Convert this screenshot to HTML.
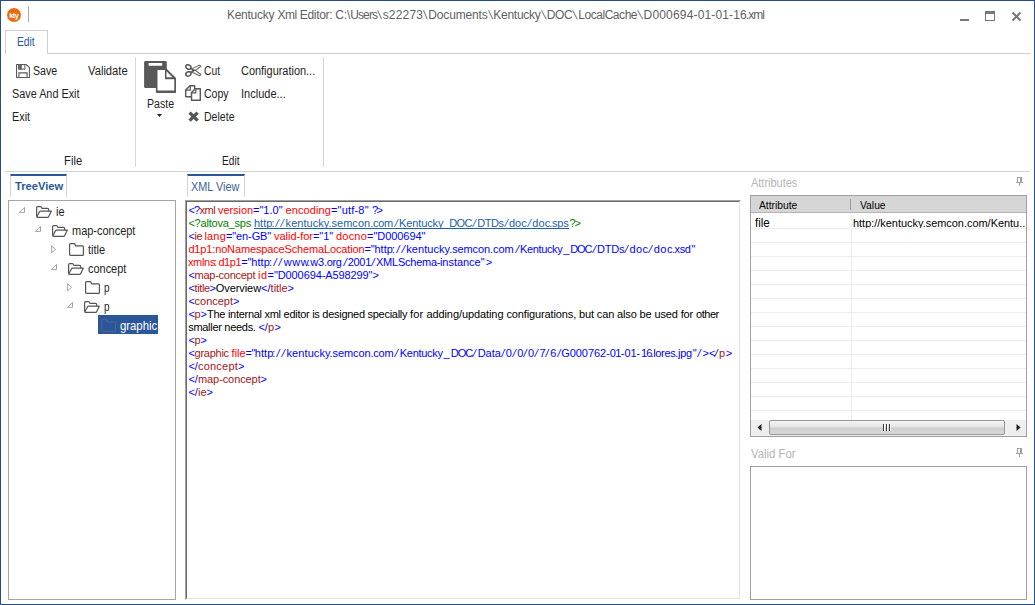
<!DOCTYPE html>
<html><head><meta charset="utf-8">
<style>
*{box-sizing:border-box;margin:0;padding:0}
html,body{width:1035px;height:605px;overflow:hidden;background:#fff}
body{font-family:"Liberation Sans",sans-serif;font-size:12px;color:#1e1e1e;position:relative}
.abs{position:absolute}
.t{position:absolute;white-space:pre;line-height:14px;height:14px;transform-origin:0 0}
.x{position:absolute;white-space:pre;font-size:11px;line-height:13px;height:13px;transform-origin:0 0}
#win{position:absolute;left:0;top:0;width:1035px;height:605px;border:1px solid #284c88}
.ln{position:absolute;background:#c6c6c6}
.b{color:#0000ff}.r{color:#a31515}.rr{color:#ff0000}.k{color:#000}.g{color:#008000}.lk{color:#215fa5}
.gl{position:absolute;left:751px;width:275px;height:1px;background:#ececec}
</style></head><body>
<div id="win"></div>

<!-- title bar -->
<div class="abs" style="left:7px;top:8px;width:14px;height:14px;border-radius:50%;background:#e96c10"></div>
<div class="t" style="left:9.2px;top:9.7px;font-size:7.5px;line-height:11px;height:11px;color:#fff;font-weight:bold;letter-spacing:-0.5px">kty</div>
<div class="ln" style="left:28px;top:6px;width:1px;height:16px;background:#a8a8a8"></div>
<!-- window buttons -->
<div class="abs" style="left:960px;top:19px;width:9px;height:2px;background:#777"></div>
<div class="abs" style="left:985px;top:11px;width:10px;height:10px;border:1px solid #777;border-top-width:3px"></div>
<svg class="abs" style="left:1011px;top:11px" width="11" height="11" viewBox="0 0 11 11"><path d="M1.5 1.5 L9.5 9.5 M9.5 1.5 L1.5 9.5" stroke="#777" stroke-width="2" fill="none"/></svg>

<!-- ribbon tab -->
<div class="ln" style="left:47px;top:53px;width:984px;height:1px;background:#cfcfcf"></div>
<div class="abs" style="left:5px;top:30px;width:43px;height:24px;border:1px solid #cfcfcf;border-bottom:none;background:#fff"></div>

<!-- ribbon content -->
<svg class="abs" style="left:16px;top:64px" width="14" height="14" viewBox="0 0 14 14"><path d="M0.55 0.55 H10.3 L13.45 3.7 V13.45 H0.55 Z" fill="#fff" stroke="#5a5a5a" stroke-width="1.1" stroke-linejoin="round"/><rect x="2.3" y="0.8" width="3.6" height="4.8" fill="#6a6a6a"/><path d="M2.7 1 V5.1 H8.9 V1" stroke="#5a5a5a" stroke-width="1" fill="none"/><path d="M2.9 13 V8.9 H11.1 V13" stroke="#5a5a5a" stroke-width="1.1" fill="none"/></svg>
<div class="ln" style="left:135px;top:57px;width:1px;height:110px;background:#d8d8d8"></div>

<!-- paste icon -->
<svg class="abs" style="left:144px;top:61px" width="32" height="32" viewBox="0 0 32 32"><rect x="0.1" y="0.1" width="22.7" height="27" rx="1.4" fill="#585858"/><rect x="4.6" y="2.1" width="13.6" height="2.6" rx="0.4" fill="#fff"/><path d="M11.9 7.9 H22.9 L32 17 V31.2 Q32 32 31.2 32 H12.7 Q11.9 32 11.9 31.2 Z" fill="#585858"/><path d="M13.5 8.9 H21 V18.2 H30.3 V29.4 H13.5 Z" fill="#fff"/><path d="M22.5 10.2 V16.2 H28.4 Z" fill="#fff"/></svg>
<svg class="abs" style="left:157px;top:114px" width="5" height="3" viewBox="0 0 5 3"><path d="M0 0 H5 L2.5 3 Z" fill="#222"/></svg>

<!-- cut copy delete -->
<svg class="abs" style="left:185px;top:64px" width="17" height="13" viewBox="0 0 17 13"><ellipse cx="3.4" cy="3" rx="2.7" ry="2.1" transform="rotate(22 3.4 3)" fill="none" stroke="#5a5a5a" stroke-width="1.55"/><ellipse cx="3.4" cy="9.9" rx="2.7" ry="2.1" transform="rotate(-22 3.4 9.9)" fill="none" stroke="#5a5a5a" stroke-width="1.55"/><path d="M5.8 4.4 L8.8 6.6 M5.8 8.5 L8.8 6.3" stroke="#5e5e5e" stroke-width="1.6" fill="none"/><path d="M7.2 4.6 L14.6 1.1 L15.9 2.4 L9.6 7 Z" fill="#fff" stroke="#606060" stroke-width="1.05" stroke-linejoin="round"/><path d="M7.2 8.3 L14.6 11.8 L15.9 10.5 L9.6 5.9 Z" fill="#fff" stroke="#606060" stroke-width="1.05" stroke-linejoin="round"/><circle cx="8.6" cy="6.45" r="0.8" fill="#444"/></svg>
<svg class="abs" style="left:185px;top:85px" width="17" height="16" viewBox="0 0 17 16"><path d="M0.7 5 L5 0.7 H9.6 V11.8 H1.4 Q0.7 11.8 0.7 11.1 Z" fill="#fff" stroke="#595959" stroke-width="1.45" stroke-linejoin="round"/><path d="M1 5.1 H5.3 V1" fill="none" stroke="#595959" stroke-width="1.2"/><path d="M6.5 7.6 L10.4 3.7 H15.3 V15.2 H6.5 Z" fill="#fff" stroke="#595959" stroke-width="1.45" stroke-linejoin="round"/><path d="M6.8 7.9 H10.8 V4" fill="none" stroke="#595959" stroke-width="1.2"/></svg>
<svg class="abs" style="left:188px;top:111px" width="11" height="11" viewBox="0 0 11 11"><path d="M1.6 1.6 L9.6 9.6 M9.6 1.6 L1.6 9.6" stroke="#555" stroke-width="3.3" fill="none"/></svg>
<div class="ln" style="left:323px;top:57px;width:1px;height:110px;background:#d8d8d8"></div>

<!-- ribbon bottom line -->
<div class="ln" style="left:5px;top:171px;width:1025px;height:1px;background:#d4d4d4"></div>

<!-- TreeView tab -->
<div class="abs" style="left:10px;top:174px;width:57px;height:23px;border:1px solid #d4d4d4;border-top:2px solid #2b579a;border-bottom:none;background:#fff"></div>
<div class="abs" style="left:8px;top:200px;width:168px;height:400px;border:1px solid #a6a6a6;background:#fff"></div>
<!--TREE0-->
<svg class="abs" style="left:19.2px;top:207.3px" width="6" height="6" viewBox="0 0 6 6"><path d="M5.5 0.4 V5.4 H0.4 Z" fill="none" stroke="#a0a0a0" stroke-width="1"/></svg>
<svg class="abs" style="left:35.9px;top:205.9px" width="16" height="12" viewBox="0 0 16 12"><path d="M0.6 10.6 V1.6 Q0.6 0.6 1.6 0.6 H4.4 Q5 0.6 5.3 1.2 L6 2.3 H11.6 Q12.6 2.3 12.6 3.3 V5.2" fill="none" stroke="#555" stroke-width="1.2"/><path d="M0.9 10.8 L3.5 5.7 Q3.8 5.2 4.4 5.2 H15.3 L12.6 10.8 Q12.3 11.4 11.7 11.4 H1.3 Q0.6 11.4 0.9 10.8 Z" fill="none" stroke="#555" stroke-width="1.2" stroke-linejoin="round"/></svg>
<svg class="abs" style="left:35.2px;top:226.3px" width="6" height="6" viewBox="0 0 6 6"><path d="M5.5 0.4 V5.4 H0.4 Z" fill="none" stroke="#a0a0a0" stroke-width="1"/></svg>
<svg class="abs" style="left:51.9px;top:224.9px" width="16" height="12" viewBox="0 0 16 12"><path d="M0.6 10.6 V1.6 Q0.6 0.6 1.6 0.6 H4.4 Q5 0.6 5.3 1.2 L6 2.3 H11.6 Q12.6 2.3 12.6 3.3 V5.2" fill="none" stroke="#555" stroke-width="1.2"/><path d="M0.9 10.8 L3.5 5.7 Q3.8 5.2 4.4 5.2 H15.3 L12.6 10.8 Q12.3 11.4 11.7 11.4 H1.3 Q0.6 11.4 0.9 10.8 Z" fill="none" stroke="#555" stroke-width="1.2" stroke-linejoin="round"/></svg>
<svg class="abs" style="left:50.9px;top:245.3px" width="6" height="9" viewBox="0 0 6 9"><path d="M0.6 0.8 V7.9 L4.6 4.3 Z" fill="none" stroke="#a6a6a6" stroke-width="1"/></svg>
<svg class="abs" style="left:68.9px;top:242.8px" width="15" height="13" viewBox="0 0 15 13"><path d="M0.6 11.4 V1.6 Q0.6 0.6 1.6 0.6 H5.2 Q5.9 0.6 6.1 1.3 L6.5 2.9 H13.4 Q14.4 2.9 14.4 3.9 V11.4 Q14.4 12.4 13.4 12.4 H1.6 Q0.6 12.4 0.6 11.4 Z" fill="none" stroke="#555" stroke-width="1.2"/></svg>
<svg class="abs" style="left:51.2px;top:264.3px" width="6" height="6" viewBox="0 0 6 6"><path d="M5.5 0.4 V5.4 H0.4 Z" fill="none" stroke="#a0a0a0" stroke-width="1"/></svg>
<svg class="abs" style="left:67.9px;top:262.9px" width="16" height="12" viewBox="0 0 16 12"><path d="M0.6 10.6 V1.6 Q0.6 0.6 1.6 0.6 H4.4 Q5 0.6 5.3 1.2 L6 2.3 H11.6 Q12.6 2.3 12.6 3.3 V5.2" fill="none" stroke="#555" stroke-width="1.2"/><path d="M0.9 10.8 L3.5 5.7 Q3.8 5.2 4.4 5.2 H15.3 L12.6 10.8 Q12.3 11.4 11.7 11.4 H1.3 Q0.6 11.4 0.9 10.8 Z" fill="none" stroke="#555" stroke-width="1.2" stroke-linejoin="round"/></svg>
<svg class="abs" style="left:66.9px;top:283.3px" width="6" height="9" viewBox="0 0 6 9"><path d="M0.6 0.8 V7.9 L4.6 4.3 Z" fill="none" stroke="#a6a6a6" stroke-width="1"/></svg>
<svg class="abs" style="left:84.9px;top:280.8px" width="15" height="13" viewBox="0 0 15 13"><path d="M0.6 11.4 V1.6 Q0.6 0.6 1.6 0.6 H5.2 Q5.9 0.6 6.1 1.3 L6.5 2.9 H13.4 Q14.4 2.9 14.4 3.9 V11.4 Q14.4 12.4 13.4 12.4 H1.6 Q0.6 12.4 0.6 11.4 Z" fill="none" stroke="#555" stroke-width="1.2"/></svg>
<svg class="abs" style="left:67.2px;top:302.3px" width="6" height="6" viewBox="0 0 6 6"><path d="M5.5 0.4 V5.4 H0.4 Z" fill="none" stroke="#a0a0a0" stroke-width="1"/></svg>
<svg class="abs" style="left:83.9px;top:300.9px" width="16" height="12" viewBox="0 0 16 12"><path d="M0.6 10.6 V1.6 Q0.6 0.6 1.6 0.6 H4.4 Q5 0.6 5.3 1.2 L6 2.3 H11.6 Q12.6 2.3 12.6 3.3 V5.2" fill="none" stroke="#555" stroke-width="1.2"/><path d="M0.9 10.8 L3.5 5.7 Q3.8 5.2 4.4 5.2 H15.3 L12.6 10.8 Q12.3 11.4 11.7 11.4 H1.3 Q0.6 11.4 0.9 10.8 Z" fill="none" stroke="#555" stroke-width="1.2" stroke-linejoin="round"/></svg>
<div class="abs" style="left:98px;top:315px;width:60px;height:19px;background:#2b579a"></div>
<svg class="abs" style="left:100.9px;top:318.8px" width="15" height="13" viewBox="0 0 15 13"><path d="M0.6 11.4 V1.6 Q0.6 0.6 1.6 0.6 H5.2 Q5.9 0.6 6.1 1.3 L6.5 2.9 H13.4 Q14.4 2.9 14.4 3.9 V11.4 Q14.4 12.4 13.4 12.4 H1.6 Q0.6 12.4 0.6 11.4 Z" fill="none" stroke="#4a6492" stroke-width="1.2"/></svg>
<!--TREE1-->

<!-- XML View tab -->
<div class="abs" style="left:187px;top:174px;width:58px;height:23px;border:1px solid #d4d4d4;border-top:2px solid #2b579a;border-bottom:none;background:#fff"></div>
<div class="abs" style="left:185px;top:200px;width:556px;height:400px;border:1px solid #fff;border-left-color:#a0a0a0;border-top-color:#a0a0a0;background:#fff"></div>
<div class="abs" style="left:186px;top:201px;width:554px;height:398px;border:1px solid #e3e3e3;border-left-color:#696969;border-top-color:#696969;background:#fff"></div>

<!-- Attributes panel -->
<div class="abs" style="left:750px;top:195px;width:277px;height:242px;border:1px solid #a0a0a0;background:#fff"></div>
<div class="abs" style="left:751px;top:196px;width:275px;height:17px;background:#d6d6d6;border-bottom:1px solid #b4b4b4"></div>
<div class="abs" style="left:850px;top:199px;width:1px;height:11px;background:#9a9a9a"></div>
<div class="gl" style="top:228px"></div>
<div class="gl" style="top:242px"></div>
<div class="gl" style="top:256px"></div>
<div class="gl" style="top:270px"></div>
<div class="gl" style="top:284px"></div>
<div class="gl" style="top:298px"></div>
<div class="gl" style="top:312px"></div>
<div class="gl" style="top:326px"></div>
<div class="gl" style="top:340px"></div>
<div class="gl" style="top:354px"></div>
<div class="gl" style="top:368px"></div>
<div class="gl" style="top:382px"></div>
<div class="gl" style="top:396px"></div>
<div class="gl" style="top:410px"></div>
<div class="abs" style="left:851px;top:214px;width:1px;height:206px;background:#ececec"></div>
<!-- scrollbar -->
<div class="abs" style="left:751px;top:420px;width:275px;height:16px;background:#efefef"></div>
<div class="abs" style="left:769px;top:420px;width:236px;height:15px;border:1px solid #979797;border-radius:2px;background:linear-gradient(#f4f4f4,#e4e4e4 45%,#cfcfcf 55%,#d9d9d9)"></div>
<div class="abs" style="left:883px;top:424px;width:2px;height:7px;background:linear-gradient(90deg,#3a3a3a 50%,#fafafa 50%)"></div>
<div class="abs" style="left:886px;top:424px;width:2px;height:7px;background:linear-gradient(90deg,#3a3a3a 50%,#fafafa 50%)"></div>
<div class="abs" style="left:889px;top:424px;width:2px;height:7px;background:linear-gradient(90deg,#3a3a3a 50%,#fafafa 50%)"></div>
<svg class="abs" style="left:757px;top:424px" width="5" height="7" viewBox="0 0 5 7"><path d="M4.5 0 V7 L0.5 3.5 Z" fill="#222"/></svg>
<svg class="abs" style="left:1016px;top:424px" width="5" height="7" viewBox="0 0 5 7"><path d="M0.5 0 V7 L4.5 3.5 Z" fill="#222"/></svg>
<!-- pins -->
<svg class="abs" style="left:1016px;top:177px" width="7" height="9" viewBox="0 0 7 9" shape-rendering="crispEdges"><rect x="1" y="0" width="5" height="1" fill="#a0a0a0"/><rect x="1" y="0" width="1" height="5" fill="#a0a0a0"/><rect x="4" y="0" width="2" height="5" fill="#a0a0a0"/><rect x="0" y="5" width="7" height="1" fill="#a0a0a0"/><rect x="3" y="6" width="1" height="3" fill="#a0a0a0"/></svg>
<svg class="abs" style="left:1016px;top:448px" width="7" height="9" viewBox="0 0 7 9" shape-rendering="crispEdges"><rect x="1" y="0" width="5" height="1" fill="#a0a0a0"/><rect x="1" y="0" width="1" height="5" fill="#a0a0a0"/><rect x="4" y="0" width="2" height="5" fill="#a0a0a0"/><rect x="0" y="5" width="7" height="1" fill="#a0a0a0"/><rect x="3" y="6" width="1" height="3" fill="#a0a0a0"/></svg>
<div class="abs" style="left:750px;top:466px;width:277px;height:134px;border:1px solid #a0a0a0;background:#fff"></div>

<div class="t" style="left:17.00px;top:35.00px;font-size:12px;color:#2b579a;transform:scaleX(0.8574)">Edit</div>
<div class="t" style="left:32.80px;top:63.80px;font-size:12px;color:#1e1e1e;transform:scaleX(0.8852)">Save</div>
<div class="t" style="left:88.00px;top:63.80px;font-size:12px;color:#1e1e1e;transform:scaleX(0.9346)">Validate</div>
<div class="t" style="left:12.30px;top:86.80px;font-size:12px;color:#1e1e1e;transform:scaleX(0.9035)">Save And Exit</div>
<div class="t" style="left:12.30px;top:109.80px;font-size:12px;color:#1e1e1e;transform:scaleX(0.9047)">Exit</div>
<div class="t" style="left:63.50px;top:153.60px;font-size:12px;color:#1e1e1e;transform:scaleX(0.9409)">File</div>
<div class="t" style="left:147.00px;top:97.00px;font-size:12px;color:#1e1e1e;transform:scaleX(0.8835)">Paste</div>
<div class="t" style="left:203.70px;top:63.80px;font-size:12px;color:#1e1e1e;transform:scaleX(0.8583)">Cut</div>
<div class="t" style="left:203.70px;top:86.80px;font-size:12px;color:#1e1e1e;transform:scaleX(0.8781)">Copy</div>
<div class="t" style="left:204.20px;top:109.80px;font-size:12px;color:#1e1e1e;transform:scaleX(0.8797)">Delete</div>
<div class="t" style="left:241.40px;top:63.80px;font-size:12px;color:#1e1e1e;transform:scaleX(0.9118)">Configuration...</div>
<div class="t" style="left:240.88px;top:86.80px;font-size:12px;color:#1e1e1e;transform:scaleX(0.9184)">Include...</div>
<div class="t" style="left:222.00px;top:153.60px;font-size:12px;color:#1e1e1e;transform:scaleX(0.8433)">Edit</div>
<div class="t" style="left:14.60px;top:179.20px;font-size:11.5px;color:#2b579a;transform:scaleX(0.9696);font-weight:bold">TreeView</div>
<div class="t" style="left:191.00px;top:179.70px;font-size:12px;color:#44619a;transform:scaleX(0.9051)">XML View</div>
<div class="t" style="left:56.30px;top:205.00px;font-size:12px;color:#1e1e1e;transform:scaleX(0.9104)">ie</div>
<div class="t" style="left:72.40px;top:224.00px;font-size:12px;color:#1e1e1e;transform:scaleX(0.9138)">map-concept</div>
<div class="t" style="left:88.30px;top:243.00px;font-size:12px;color:#1e1e1e;transform:scaleX(0.9211)">title</div>
<div class="t" style="left:88.30px;top:262.00px;font-size:12px;color:#1e1e1e;transform:scaleX(0.9111)">concept</div>
<div class="t" style="left:104.40px;top:281.00px;font-size:12px;color:#1e1e1e;transform:scaleX(0.8286)">p</div>
<div class="t" style="left:104.40px;top:300.00px;font-size:12px;color:#1e1e1e;transform:scaleX(0.8286)">p</div>
<div class="t" style="left:120.00px;top:319.00px;font-size:12px;color:#ffffff;transform:scaleX(0.9426)">graphic</div>
<div class="t" style="left:751.00px;top:176.00px;font-size:12px;color:#b4b4b4;transform:scaleX(0.9134)">Attributes</div>
<div class="t" style="left:751.00px;top:446.60px;font-size:12px;color:#b4b4b4;transform:scaleX(0.9463)">Valid For</div>
<div class="t" style="left:759.00px;top:197.80px;font-size:11px;color:#000;transform:scaleX(0.9352)">Attribute</div>
<div class="t" style="left:859.50px;top:197.80px;font-size:11px;color:#000;transform:scaleX(0.9375)">Value</div>
<div class="t" style="left:755.10px;top:216.00px;font-size:12px;color:#000;transform:scaleX(0.9639)">file</div>
<div class="t" style="left:853.20px;top:216.00px;font-size:11px;color:#000;transform:scaleX(0.9932)">http://kentucky.semcon.com/Kentu..</div>
<span class="x b" style="left:188.40px;top:204.00px;letter-spacing:-0.771px">&lt;?</span>
<span class="x r" style="left:199.40px;top:204.00px;letter-spacing:-0.391px">xml</span>
<span class="x rr" style="left:215.01px;top:204.00px;letter-spacing:-0.066px"> version</span>
<span class="x b" style="left:253.00px;top:204.00px;letter-spacing:0.003px">=&quot;1.0&quot;</span>
<span class="x rr" style="left:282.45px;top:204.00px;letter-spacing:0.094px"> encoding</span>
<span class="x b" style="left:331.00px;top:204.00px;letter-spacing:0.189px">=&quot;utf-8&quot;</span>
<span class="x b" style="left:370.66px;top:204.00px;letter-spacing:-1.718px"> ?</span>
<span class="x b" style="left:376.40px;top:204.00px;letter-spacing:0.000px">&gt;</span>
<span class="x g" style="left:188.40px;top:217.00px;letter-spacing:-0.207px">&lt;?altova_sps </span>
<span class="x lk" style="left:253.90px;top:217.00px;letter-spacing:0.038px">http</span>
<span class="x lk" style="left:271.40px;top:217.00px;letter-spacing:-0.156px">:</span>
<span class="x lk" style="left:275.30px;top:217.00px;width:5.10px;transform:skewX(-11.0deg);transform-origin:0 10.0px">/</span>
<span class="x lk" style="left:280.40px;top:217.00px;width:5.20px;transform:skewX(-11.7deg);transform-origin:0 10.0px">/</span>
<span class="x lk" style="left:285.60px;top:217.00px;letter-spacing:0.049px">kentucky</span>
<span class="x lk" style="left:328.40px;top:217.00px;letter-spacing:0.033px">.semcon</span>
<span class="x lk" style="left:370.20px;top:217.00px;letter-spacing:-0.309px">.com</span>
<span class="x lk" style="left:393.80px;top:217.00px;width:5.30px;transform:skewX(-12.4deg);transform-origin:0 10.0px">/</span>
<span class="x lk" style="left:399.10px;top:217.00px;letter-spacing:-0.129px">Kentucky_</span>
<span class="x lk" style="left:449.30px;top:217.00px;letter-spacing:-0.648px">DOC</span>
<span class="x lk" style="left:471.80px;top:217.00px;width:5.40px;transform:skewX(-13.1deg);transform-origin:0 10.0px">/</span>
<span class="x lk" style="left:477.20px;top:217.00px;letter-spacing:-0.452px">DTDs</span>
<span class="x lk" style="left:503.50px;top:217.00px;width:5.40px;transform:skewX(-13.1deg);transform-origin:0 10.0px">/</span>
<span class="x lk" style="left:508.90px;top:217.00px;letter-spacing:0.088px">doc</span>
<span class="x lk" style="left:526.90px;top:217.00px;width:5.40px;transform:skewX(-13.1deg);transform-origin:0 10.0px">/</span>
<span class="x lk" style="left:532.30px;top:217.00px;letter-spacing:0.088px">doc</span>
<span class="x lk" style="left:549.30px;top:217.00px;letter-spacing:-0.268px">.sps</span>
<span class="x g" style="left:569.40px;top:217.00px;letter-spacing:-1.118px">?&gt;</span>
<span class="x b" style="left:188.40px;top:230.00px;letter-spacing:-0.224px">&lt;</span>
<span class="x r" style="left:194.60px;top:230.00px;letter-spacing:-0.606px">ie</span>
<span class="x rr" style="left:201.14px;top:230.00px;letter-spacing:0.201px"> lang</span>
<span class="x b" style="left:226.00px;top:230.00px;letter-spacing:-0.120px">=&quot;en-GB&quot;</span>
<span class="x rr" style="left:270.96px;top:230.00px;letter-spacing:-0.014px"> valid-for</span>
<span class="x b" style="left:313.00px;top:230.00px;letter-spacing:-0.081px">=&quot;1&quot;</span>
<span class="x rr" style="left:332.74px;top:230.00px;letter-spacing:0.206px"> docno</span>
<span class="x b" style="left:367.00px;top:230.00px;letter-spacing:-0.042px">=&quot;D000694&quot;</span>
<span class="x rr" style="left:188.40px;top:243.00px;letter-spacing:-0.147px">d1p1:noNamespaceSchemaLocation</span>
<span class="x b" style="left:364.40px;top:243.00px;letter-spacing:-0.164px">=&quot;</span>
<span class="x b" style="left:374.40px;top:243.00px;letter-spacing:0.038px">http</span>
<span class="x b" style="left:391.90px;top:243.00px;letter-spacing:-0.156px">:</span>
<span class="x b" style="left:395.80px;top:243.00px;width:5.00px;transform:skewX(-10.3deg);transform-origin:0 10.0px">/</span>
<span class="x b" style="left:400.80px;top:243.00px;width:5.40px;transform:skewX(-13.1deg);transform-origin:0 10.0px">/</span>
<span class="x b" style="left:406.20px;top:243.00px;letter-spacing:0.074px">kentucky</span>
<span class="x b" style="left:449.20px;top:243.00px;letter-spacing:-0.110px">.semcon</span>
<span class="x b" style="left:490.00px;top:243.00px;letter-spacing:-0.084px">.com</span>
<span class="x b" style="left:514.50px;top:243.00px;width:5.50px;transform:skewX(-13.8deg);transform-origin:0 10.0px">/</span>
<span class="x b" style="left:520.00px;top:243.00px;letter-spacing:-0.368px">Kentucky</span>
<span class="x b" style="left:563.30px;top:243.00px;letter-spacing:1.782px">_</span>
<span class="x b" style="left:570.20px;top:243.00px;letter-spacing:-1.048px">DOC</span>
<span class="x b" style="left:591.50px;top:243.00px;width:5.40px;transform:skewX(-13.1deg);transform-origin:0 10.0px">/</span>
<span class="x b" style="left:596.90px;top:243.00px;letter-spacing:-0.202px">DTDs</span>
<span class="x b" style="left:624.20px;top:243.00px;width:5.40px;transform:skewX(-13.1deg);transform-origin:0 10.0px">/</span>
<span class="x b" style="left:629.60px;top:243.00px;letter-spacing:0.355px">doc</span>
<span class="x b" style="left:648.40px;top:243.00px;width:5.40px;transform:skewX(-13.1deg);transform-origin:0 10.0px">/</span>
<span class="x b" style="left:653.80px;top:243.00px;letter-spacing:0.455px">doc</span>
<span class="x b" style="left:671.90px;top:243.00px;letter-spacing:-0.393px">.xsd</span>
<span class="x b" style="left:691.50px;top:243.00px;letter-spacing:0.000px">&quot;</span>
<span class="x rr" style="left:187.90px;top:256.00px;letter-spacing:-0.305px">xmlns</span>
<span class="x rr" style="left:214.10px;top:256.00px;letter-spacing:0.244px">:</span>
<span class="x rr" style="left:218.40px;top:256.00px;letter-spacing:-0.393px">d1p1</span>
<span class="x b" style="left:241.30px;top:256.00px;letter-spacing:-0.164px">=&quot;</span>
<span class="x b" style="left:251.30px;top:256.00px;letter-spacing:0.063px">http</span>
<span class="x b" style="left:268.90px;top:256.00px;letter-spacing:-0.256px">:</span>
<span class="x b" style="left:272.70px;top:256.00px;width:5.00px;transform:skewX(-10.3deg);transform-origin:0 10.0px">/</span>
<span class="x b" style="left:277.70px;top:256.00px;width:5.00px;transform:skewX(-10.3deg);transform-origin:0 10.0px">/</span>
<span class="x b" style="left:283.70px;top:256.00px;letter-spacing:0.589px">www</span>
<span class="x b" style="left:307.30px;top:256.00px;letter-spacing:-0.106px">.w3</span>
<span class="x b" style="left:324.10px;top:256.00px;letter-spacing:-0.389px">.org</span>
<span class="x b" style="left:342.50px;top:256.00px;width:5.20px;transform:skewX(-11.7deg);transform-origin:0 10.0px">/</span>
<span class="x b" style="left:347.70px;top:256.00px;letter-spacing:-0.293px">2001</span>
<span class="x b" style="left:371.00px;top:256.00px;width:5.00px;transform:skewX(-10.3deg);transform-origin:0 10.0px">/</span>
<span class="x b" style="left:376.00px;top:256.00px;letter-spacing:-0.241px">XMLSchema</span>
<span class="x b" style="left:436.80px;top:256.00px;letter-spacing:-0.563px">-</span>
<span class="x b" style="left:439.90px;top:256.00px;letter-spacing:-0.021px">instance</span>
<span class="x b" style="left:480.70px;top:256.00px;letter-spacing:1.095px">&quot;</span>
<span class="x b" style="left:485.70px;top:256.00px;letter-spacing:0.000px">&gt;</span>
<span class="x b" style="left:188.40px;top:269.00px;letter-spacing:-0.224px">&lt;</span>
<span class="x r" style="left:194.60px;top:269.00px;letter-spacing:-0.270px">map-concept</span>
<span class="x rr" style="left:254.42px;top:269.00px;letter-spacing:0.519px"> id</span>
<span class="x b" style="left:267.60px;top:269.00px;letter-spacing:-0.099px">=&quot;D000694-A598299&quot;&gt;</span>
<span class="x b" style="left:188.40px;top:282.00px;letter-spacing:-0.224px">&lt;</span>
<span class="x r" style="left:194.60px;top:282.00px;letter-spacing:-0.424px">title</span>
<span class="x b" style="left:209.60px;top:282.00px;letter-spacing:-0.224px">&gt;</span>
<span class="x k" style="left:215.80px;top:282.00px;letter-spacing:-0.080px">Overview</span>
<span class="x b" style="left:261.00px;top:282.00px;letter-spacing:0.060px">&lt;/</span>
<span class="x r" style="left:270.60px;top:282.00px;letter-spacing:-0.024px">title</span>
<span class="x b" style="left:287.60px;top:282.00px;letter-spacing:0.000px">&gt;</span>
<span class="x b" style="left:188.40px;top:295.00px;letter-spacing:-0.224px">&lt;</span>
<span class="x r" style="left:194.60px;top:295.00px;letter-spacing:-0.018px">concept</span>
<span class="x b" style="left:233.00px;top:295.00px;letter-spacing:0.000px">&gt;</span>
<span class="x b" style="left:188.40px;top:308.00px;letter-spacing:-0.224px">&lt;</span>
<span class="x r" style="left:194.60px;top:308.00px;letter-spacing:-0.318px">p</span>
<span class="x b" style="left:200.40px;top:308.00px;letter-spacing:0.176px">&gt;</span>
<span class="x k" style="left:207.00px;top:308.00px;letter-spacing:-0.279px">The internal xml editor is designed specially </span>
<span class="x k" style="left:410.00px;top:308.00px;letter-spacing:0.127px">for </span>
<span class="x k" style="left:426.40px;top:308.00px;letter-spacing:-0.084px">adding/updating </span>
<span class="x k" style="left:506.40px;top:308.00px;letter-spacing:-0.125px">configurations, </span>
<span class="x k" style="left:579.00px;top:308.00px;letter-spacing:-0.139px">but can also be used for </span>
<span class="x k" style="left:696.00px;top:308.00px;letter-spacing:-0.452px">other</span>
<span class="x k" style="left:188.20px;top:321.00px;letter-spacing:-0.293px">smaller needs. </span>
<span class="x b" style="left:258.40px;top:321.00px;letter-spacing:0.060px">&lt;/</span>
<span class="x r" style="left:268.00px;top:321.00px;letter-spacing:0.282px">p</span>
<span class="x b" style="left:274.40px;top:321.00px;letter-spacing:0.000px">&gt;</span>
<span class="x b" style="left:188.40px;top:334.00px;letter-spacing:-0.224px">&lt;</span>
<span class="x r" style="left:194.60px;top:334.00px;letter-spacing:-0.318px">p</span>
<span class="x b" style="left:200.40px;top:334.00px;letter-spacing:0.000px">&gt;</span>
<span class="x b" style="left:188.40px;top:347.00px;letter-spacing:-0.224px">&lt;</span>
<span class="x r" style="left:194.60px;top:347.00px;letter-spacing:-0.267px">graphic</span>
<span class="x rr" style="left:228.56px;top:347.00px;letter-spacing:-0.015px"> file</span>
<span class="x b" style="left:245.60px;top:347.00px;letter-spacing:-0.564px">=&quot;</span>
<span class="x b" style="left:254.80px;top:347.00px;letter-spacing:0.038px">http</span>
<span class="x b" style="left:272.30px;top:347.00px;letter-spacing:-0.156px">:</span>
<span class="x b" style="left:276.20px;top:347.00px;width:5.00px;transform:skewX(-10.3deg);transform-origin:0 10.0px">/</span>
<span class="x b" style="left:281.20px;top:347.00px;width:5.30px;transform:skewX(-12.4deg);transform-origin:0 10.0px">/</span>
<span class="x b" style="left:286.50px;top:347.00px;letter-spacing:0.086px">kentucky</span>
<span class="x b" style="left:329.60px;top:347.00px;letter-spacing:-0.110px">.semcon</span>
<span class="x b" style="left:370.40px;top:347.00px;letter-spacing:-0.209px">.com</span>
<span class="x b" style="left:394.40px;top:347.00px;width:5.40px;transform:skewX(-13.1deg);transform-origin:0 10.0px">/</span>
<span class="x b" style="left:399.80px;top:347.00px;letter-spacing:-0.306px">Kentucky</span>
<span class="x b" style="left:443.60px;top:347.00px;letter-spacing:2.082px">_</span>
<span class="x b" style="left:450.80px;top:347.00px;letter-spacing:-0.981px">DOC</span>
<span class="x b" style="left:472.30px;top:347.00px;width:5.40px;transform:skewX(-13.1deg);transform-origin:0 10.0px">/</span>
<span class="x b" style="left:477.70px;top:347.00px;letter-spacing:-0.009px">Data</span>
<span class="x b" style="left:500.90px;top:347.00px;width:4.80px;transform:skewX(-8.9deg);transform-origin:0 10.0px">/</span>
<span class="x b" style="left:505.70px;top:347.00px;letter-spacing:0.182px">0</span>
<span class="x b" style="left:512.00px;top:347.00px;width:5.30px;transform:skewX(-12.4deg);transform-origin:0 10.0px">/</span>
<span class="x b" style="left:517.30px;top:347.00px;letter-spacing:-0.418px">0</span>
<span class="x b" style="left:523.00px;top:347.00px;width:5.00px;transform:skewX(-10.3deg);transform-origin:0 10.0px">/</span>
<span class="x b" style="left:528.00px;top:347.00px;letter-spacing:0.182px">0</span>
<span class="x b" style="left:534.30px;top:347.00px;width:5.30px;transform:skewX(-12.4deg);transform-origin:0 10.0px">/</span>
<span class="x b" style="left:539.60px;top:347.00px;letter-spacing:-0.318px">7</span>
<span class="x b" style="left:545.40px;top:347.00px;width:4.80px;transform:skewX(-8.9deg);transform-origin:0 10.0px">/</span>
<span class="x b" style="left:550.20px;top:347.00px;letter-spacing:0.182px">6</span>
<span class="x b" style="left:556.50px;top:347.00px;width:4.80px;transform:skewX(-8.9deg);transform-origin:0 10.0px">/</span>
<span class="x b" style="left:561.30px;top:347.00px;letter-spacing:-0.080px">G000762</span>
<span class="x b" style="left:606.00px;top:347.00px;letter-spacing:0.037px">-</span>
<span class="x b" style="left:609.70px;top:347.00px;letter-spacing:-0.568px">01</span>
<span class="x b" style="left:620.80px;top:347.00px;letter-spacing:0.137px">-</span>
<span class="x b" style="left:624.60px;top:347.00px;letter-spacing:-0.318px">01</span>
<span class="x b" style="left:636.20px;top:347.00px;letter-spacing:1.137px">-</span>
<span class="x b" style="left:641.00px;top:347.00px;letter-spacing:-0.818px">16</span>
<span class="x b" style="left:650.60px;top:347.00px;letter-spacing:-0.366px">.lores</span>
<span class="x b" style="left:675.30px;top:347.00px;letter-spacing:-0.309px">.jpg</span>
<span class="x b" style="left:692.80px;top:347.00px;letter-spacing:0.695px">&quot;</span>
<span class="x b" style="left:697.40px;top:347.00px;width:5.10px;transform:skewX(-11.0deg);transform-origin:0 10.0px">/</span>
<span class="x b" style="left:702.50px;top:347.00px;letter-spacing:0.076px">&gt;</span>
<span class="x b" style="left:709.00px;top:347.00px;letter-spacing:-1.424px">&lt;</span>
<span class="x b" style="left:714.00px;top:347.00px;width:5.10px;transform:skewX(-11.0deg);transform-origin:0 10.0px">/</span>
<span class="x r" style="left:719.10px;top:347.00px;letter-spacing:0.482px">p</span>
<span class="x b" style="left:725.70px;top:347.00px;letter-spacing:0.000px">&gt;</span>
<span class="x b" style="left:188.40px;top:360.00px;letter-spacing:0.060px">&lt;/</span>
<span class="x r" style="left:198.00px;top:360.00px;letter-spacing:0.210px">concept</span>
<span class="x b" style="left:238.00px;top:360.00px;letter-spacing:0.000px">&gt;</span>
<span class="x b" style="left:188.40px;top:373.00px;letter-spacing:0.060px">&lt;/</span>
<span class="x r" style="left:198.00px;top:373.00px;letter-spacing:-0.090px">map-concept</span>
<span class="x b" style="left:260.60px;top:373.00px;letter-spacing:0.000px">&gt;</span>
<span class="x b" style="left:188.40px;top:386.00px;letter-spacing:0.060px">&lt;/</span>
<span class="x r" style="left:198.00px;top:386.00px;letter-spacing:0.019px">ie</span>
<span class="x b" style="left:206.60px;top:386.00px;letter-spacing:0.000px">&gt;</span>
<span class="t " style="left:226.90px;top:7.80px;letter-spacing:-0.244px;color:#5f5f5f">Kentucky </span>
<span class="t " style="left:277.40px;top:7.80px;letter-spacing:-0.400px;color:#5f5f5f">Xml </span>
<span class="t " style="left:299.80px;top:7.80px;letter-spacing:-0.314px;color:#5f5f5f">Editor: </span>
<span class="t " style="left:335.30px;top:7.80px;letter-spacing:-0.145px;color:#5f5f5f">C:\</span>
<span class="t " style="left:350.20px;top:7.80px;letter-spacing:-0.867px;color:#5f5f5f">Users</span>
<span class="t " style="left:377.20px;top:7.80px;width:5.50px;transform:skewX(10.9deg);transform-origin:0 2.4px;color:#5f5f5f">\</span>
<span class="t " style="left:382.70px;top:7.80px;letter-spacing:0.172px;color:#5f5f5f">s22273</span>
<span class="t " style="left:423.10px;top:7.80px;width:5.10px;transform:skewX(8.3deg);transform-origin:0 2.4px;color:#5f5f5f">\</span>
<span class="t " style="left:428.20px;top:7.80px;letter-spacing:-0.132px;color:#5f5f5f">Documents</span>
<span class="t " style="left:487.70px;top:7.80px;width:5.50px;transform:skewX(10.9deg);transform-origin:0 2.4px;color:#5f5f5f">\</span>
<span class="t " style="left:493.20px;top:7.80px;letter-spacing:-0.245px;color:#5f5f5f">Kentucky</span>
<span class="t " style="left:540.60px;top:7.80px;width:6.10px;transform:skewX(14.7deg);transform-origin:0 2.4px;color:#5f5f5f">\</span>
<span class="t " style="left:546.70px;top:7.80px;letter-spacing:-0.389px;color:#5f5f5f">DOC</span>
<span class="t " style="left:572.20px;top:7.80px;width:6.00px;transform:skewX(14.1deg);transform-origin:0 2.4px;color:#5f5f5f">\</span>
<span class="t " style="left:578.20px;top:7.80px;letter-spacing:-0.448px;color:#5f5f5f">LocalCache</span>
<span class="t " style="left:637.10px;top:7.80px;width:6.50px;transform:skewX(17.1deg);transform-origin:0 2.4px;color:#5f5f5f">\</span>
<span class="t " style="left:643.60px;top:7.80px;letter-spacing:0.170px;color:#5f5f5f">D000694</span>
<span class="t " style="left:693.50px;top:7.80px;letter-spacing:0.141px;color:#5f5f5f">-01-01-16</span>
<span class="t " style="left:745.80px;top:7.80px;letter-spacing:-0.977px;color:#5f5f5f">.xml</span>
<div class="abs" style="left:254px;top:228px;width:314.5px;height:1px;background:#215fa5"></div>
<div class="abs" style="left:852px;top:228px;width:174px;height:4px;background:#fff"></div><div class="gl" style="top:228px"></div>
</body></html>
